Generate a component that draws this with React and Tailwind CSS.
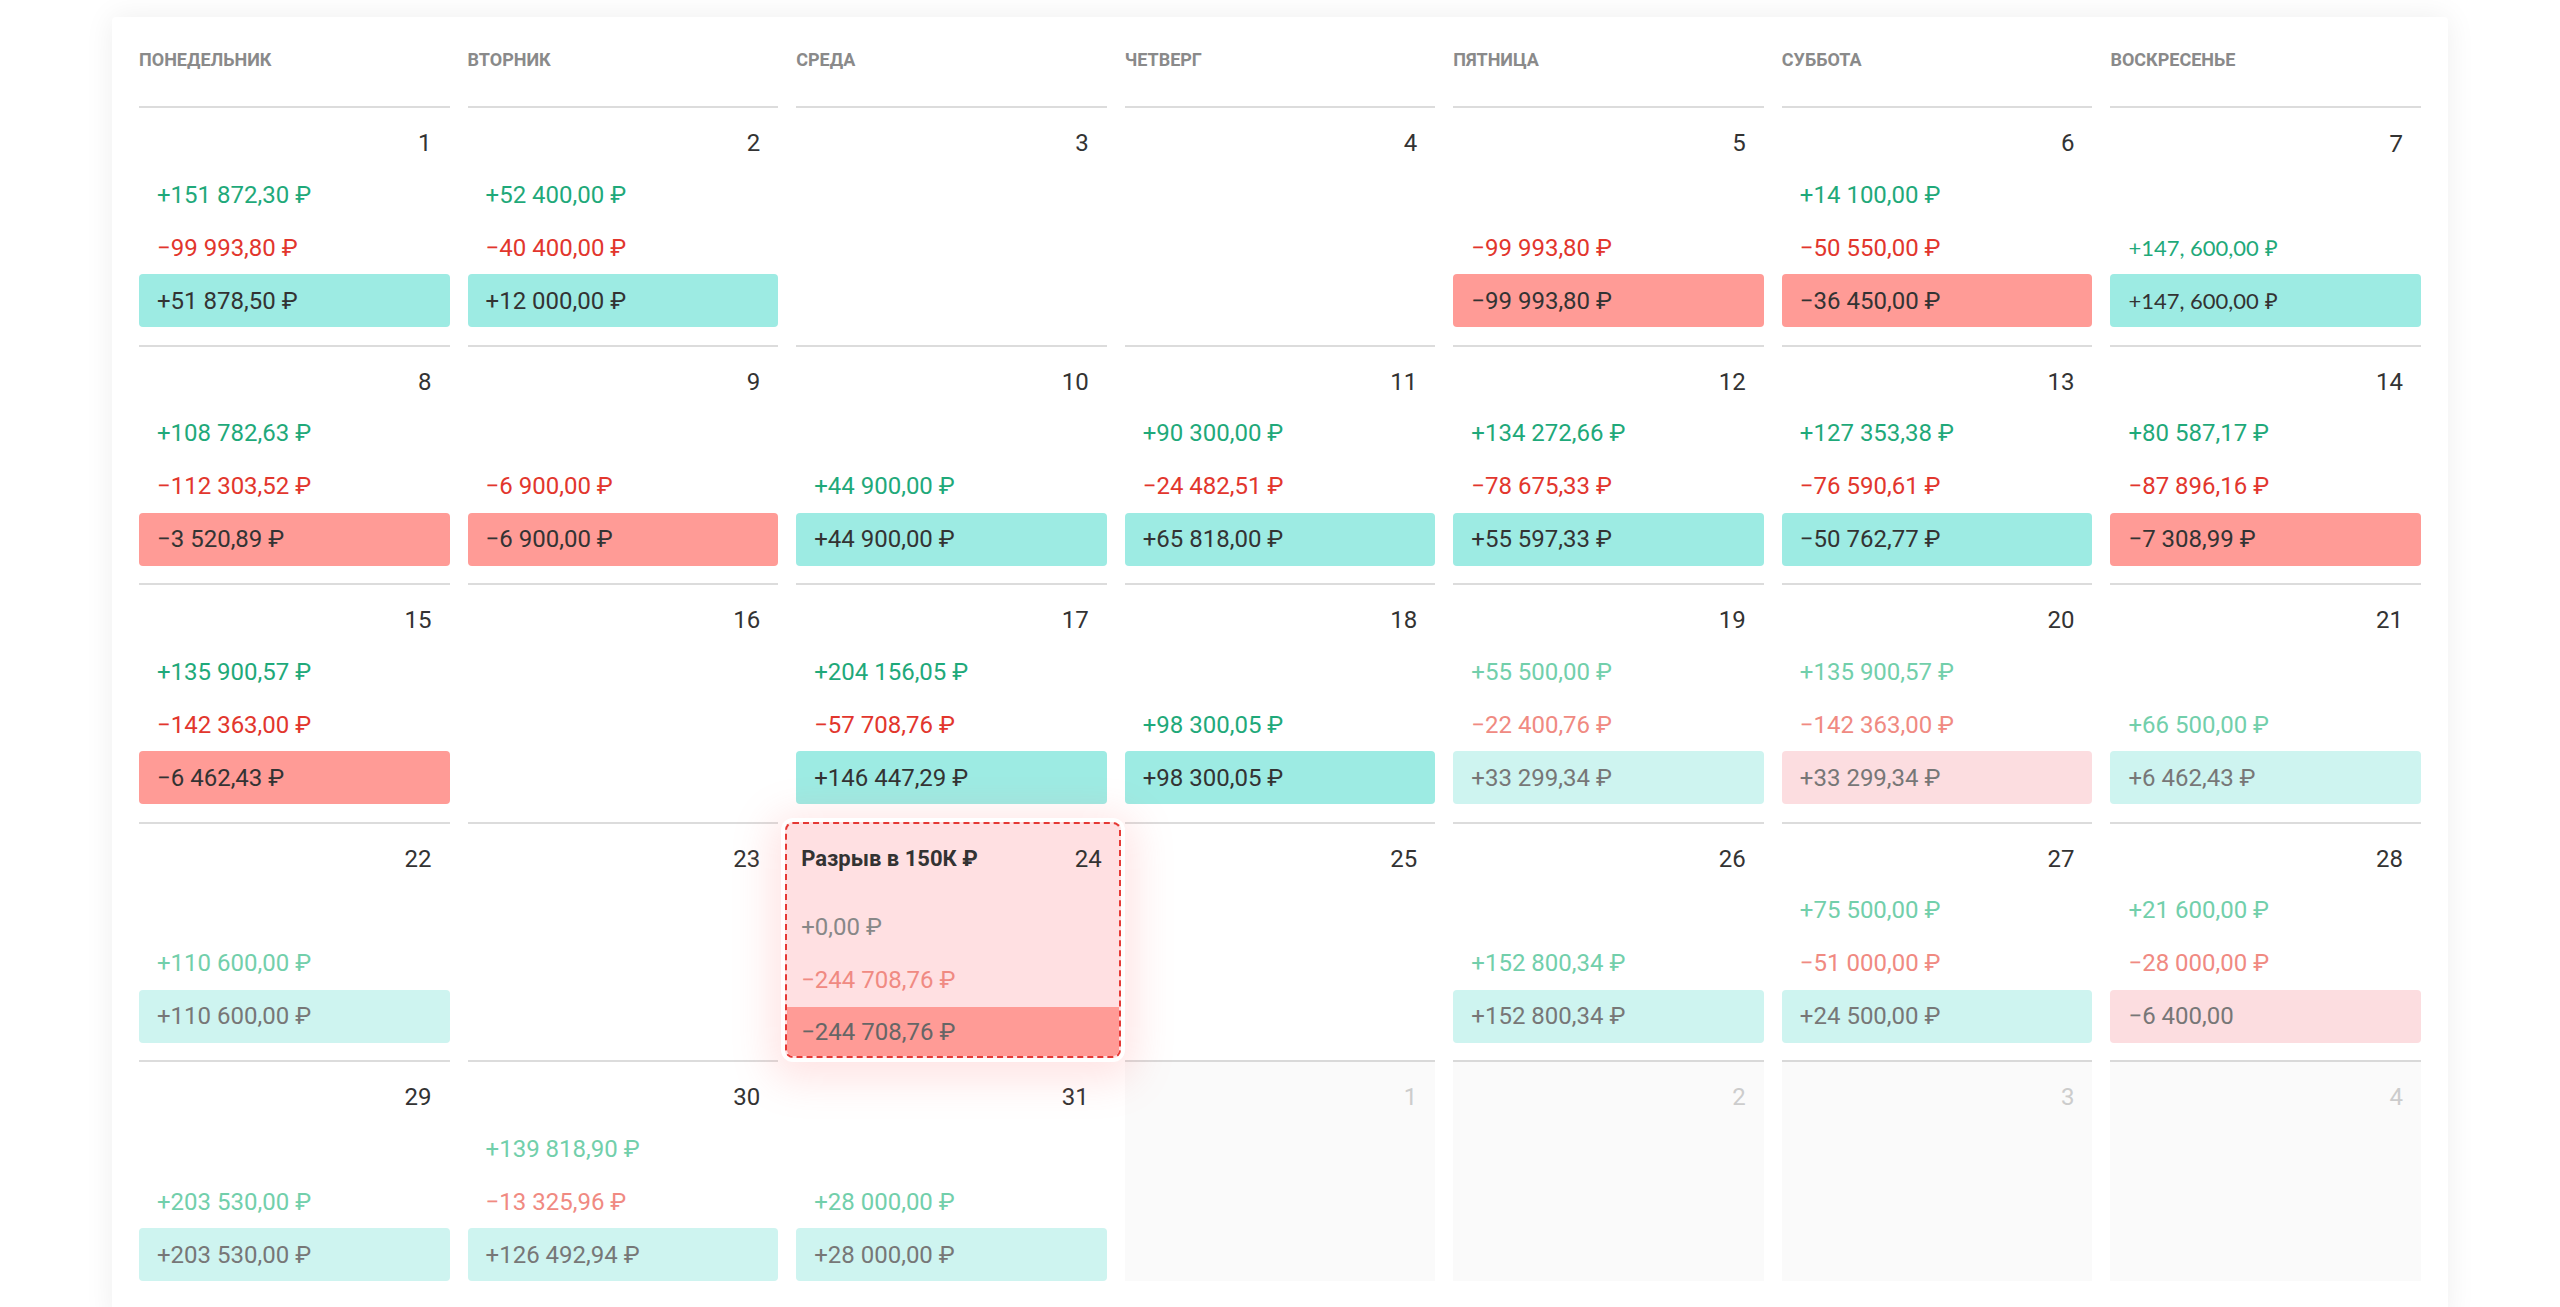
import React from "react";

const days = ["Понедельник", "Вторник", "Среда", "Четверг", "Пятница", "Суббота", "Воскресенье"];

const P = (t) => ({ t, c: "g" });
const M = (t) => ({ t, c: "r" });

const weeks = [
  [
    { d: 1, s1: P("+151 872,30 ₽"), s2: M("−99 993,80 ₽"), box: ["teal", "+51 878,50 ₽"] },
    { d: 2, s1: P("+52 400,00 ₽"), s2: M("−40 400,00 ₽"), box: ["teal", "+12 000,00 ₽"] },
    { d: 3 },
    { d: 4 },
    { d: 5, s2: M("−99 993,80 ₽"), box: ["red", "−99 993,80 ₽"] },
    { d: 6, s1: P("+14 100,00 ₽"), s2: M("−50 550,00 ₽"), box: ["red", "−36 450,00 ₽"] },
    { d: 7, lato: true, s2: P("+147, 600,00 ₽"), box: ["teal", "+147, 600,00 ₽"] },
  ],
  [
    { d: 8, s1: P("+108 782,63 ₽"), s2: M("−112 303,52 ₽"), box: ["red", "−3 520,89 ₽"] },
    { d: 9, s2: M("−6 900,00 ₽"), box: ["red", "−6 900,00 ₽"] },
    { d: 10, s2: P("+44 900,00 ₽"), box: ["teal", "+44 900,00 ₽"] },
    { d: 11, s1: P("+90 300,00 ₽"), s2: M("−24 482,51 ₽"), box: ["teal", "+65 818,00 ₽"] },
    { d: 12, s1: P("+134 272,66 ₽"), s2: M("−78 675,33 ₽"), box: ["teal", "+55 597,33 ₽"] },
    { d: 13, s1: P("+127 353,38 ₽"), s2: M("−76 590,61 ₽"), box: ["teal", "−50 762,77 ₽"] },
    { d: 14, s1: P("+80 587,17 ₽"), s2: M("−87 896,16 ₽"), box: ["red", "−7 308,99 ₽"] },
  ],
  [
    { d: 15, s1: P("+135 900,57 ₽"), s2: M("−142 363,00 ₽"), box: ["red", "−6 462,43 ₽"] },
    { d: 16 },
    { d: 17, s1: P("+204 156,05 ₽"), s2: M("−57 708,76 ₽"), box: ["teal", "+146 447,29 ₽"] },
    { d: 18, s2: P("+98 300,05 ₽"), box: ["teal", "+98 300,05 ₽"] },
    { d: 19, faded: true, s1: P("+55 500,00 ₽"), s2: M("−22 400,76 ₽"), box: ["teal", "+33 299,34 ₽"] },
    { d: 20, faded: true, s1: P("+135 900,57 ₽"), s2: M("−142 363,00 ₽"), box: ["red", "+33 299,34 ₽"] },
    { d: 21, faded: true, s2: P("+66 500,00 ₽"), box: ["teal", "+6 462,43 ₽"] },
  ],
  [
    { d: 22, faded: true, s2: P("+110 600,00 ₽"), box: ["teal", "+110 600,00 ₽"] },
    { d: 23 },
    { d: 24, gap: true },
    { d: 25 },
    { d: 26, faded: true, s2: P("+152 800,34 ₽"), box: ["teal", "+152 800,34 ₽"] },
    { d: 27, faded: true, s1: P("+75 500,00 ₽"), s2: M("−51 000,00 ₽"), box: ["teal", "+24 500,00 ₽"] },
    { d: 28, faded: true, s1: P("+21 600,00 ₽"), s2: M("−28 000,00 ₽"), box: ["red", "−6 400,00"] },
  ],
  [
    { d: 29, faded: true, s2: P("+203 530,00 ₽"), box: ["teal", "+203 530,00 ₽"] },
    { d: 30, faded: true, s1: P("+139 818,90 ₽"), s2: M("−13 325,96 ₽"), box: ["teal", "+126 492,94 ₽"] },
    { d: 31, faded: true, s2: P("+28 000,00 ₽"), box: ["teal", "+28 000,00 ₽"] },
    { d: 1, next: true },
    { d: 2, next: true },
    { d: 3, next: true },
    { d: 4, next: true },
  ],
];

const textColor = {
  g: "text-[#1fa97a]",
  r: "text-[#e2362d]",
};
const fadedTextColor = {
  g: "text-[#72cfab]",
  r: "text-[#f08a82]",
};
const boxColor = {
  teal: "bg-[#9debe3] text-[#333]",
  red: "bg-[#ff9b96] text-[#333]",
};
const fadedBoxColor = {
  teal: "bg-[#cef4f0] text-[#777]",
  red: "bg-[#fcdde0] text-[#777]",
};

const Slot = ({ item, faded }) => (
  <div className="h-[53px] flex items-center px-[18px]">
    {item && <span className={faded ? fadedTextColor[item.c] : textColor[item.c]}>{item.t}</span>}
  </div>
);

// the "cash gap" day sits over its grid cell
const GapCard = ({ d }) => (
  <div className="absolute z-10 -top-[2px] -left-[11px] -right-[14px] -bottom-[15px] rounded-lg border-2 border-dashed border-[#e53935] bg-[#ffe0e2] overflow-hidden shadow-[0_0_0_4px_#fff,0_8px_40px_14px_rgba(255,120,120,0.2)]">
    <div className="mt-[10px] h-[50px] flex items-center justify-between pl-[14px] pr-[17px]">
      <span className="font-bold text-[22px] text-[#333]">Разрыв в 150К ₽</span>
      <span className="text-[#333]">{d}</span>
    </div>
    <div className="h-[17px]" />
    <div className="h-[53px] flex items-center px-[14px] text-[#888]">+0,00 ₽</div>
    <div className="h-[53px] flex items-center px-[14px] text-[#f08a82]">−244 708,76 ₽</div>
    <div className="h-[50px] flex items-center px-[14px] bg-[#ff9b96] text-[#666]">−244 708,76 ₽</div>
  </div>
);

const DayCell = ({ cell }) => {
  if (cell.next) {
    return (
      <div className="h-[221px] border-t-2 border-[#d9d9d9] bg-[#fafafa] pt-[10px]">
        <div className="h-[50px] flex items-center justify-end pr-[18px] text-[#cccccc]">{cell.d}</div>
      </div>
    );
  }
  return (
    <div className={`relative h-[221px] border-t-2 border-[#dcdcdc] pt-[10px] ${cell.lato ? "font-[Lato] text-[22px]" : ""}`}>
      <div className="h-[50px] flex items-center justify-end pr-[18px] text-[24px] text-[#333]">
        {!cell.gap && cell.d}
      </div>
      <Slot item={cell.s1} faded={cell.faded} />
      <Slot item={cell.s2} faded={cell.faded} />
      {cell.box ? (
        <div
          className={`h-[53px] flex items-center px-[18px] rounded ${
            cell.faded ? fadedBoxColor[cell.box[0]] : boxColor[cell.box[0]]
          }`}
        >
          {cell.box[1]}
        </div>
      ) : (
        <div className="h-[53px]" />
      )}
      {cell.gap && <GapCard d={cell.d} />}
    </div>
  );
};

const App = () => {
  return (
    <div className="min-h-screen bg-white px-[112px] pt-[17px] font-[Roboto,sans-serif] text-[24px] overflow-hidden">
      <div className="bg-white rounded shadow-[0_0_30px_rgba(0,0,0,0.07)] px-[27px] pb-[40px]">
        <div className="grid grid-cols-7 gap-x-[18px] h-[89px] pt-[31px]">
          {days.map((day) => (
            <div key={day} className="uppercase font-bold text-[18px] leading-[24px] text-[#8a8a8a]">
              {day}
            </div>
          ))}
        </div>
        <div className="grid grid-cols-7 gap-x-[18px] gap-y-[17.5px]">
          {weeks.flat().map((cell, i) => (
            <DayCell key={i} cell={cell} />
          ))}
        </div>
      </div>
    </div>
  );
};

export default App;
